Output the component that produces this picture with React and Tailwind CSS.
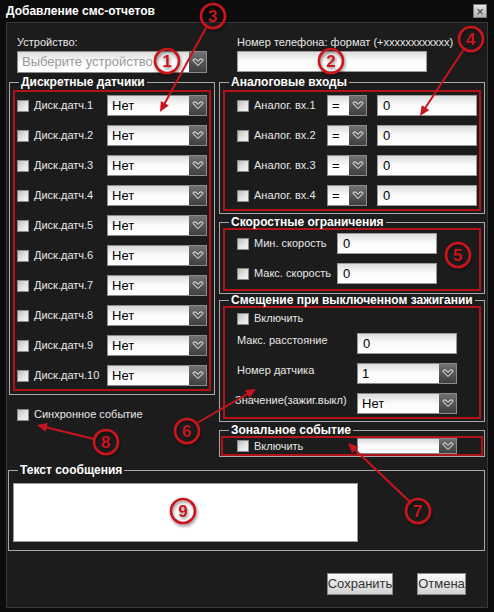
import React from "react";

const Chevron = () => (
  <svg width="12" height="9" viewBox="0 0 12 9">
    <path d="M1.2 1.8 Q1.4 1 2.2 1 L3.8 1 L6 3.4 L8.2 1 L9.8 1 Q10.6 1 10.8 1.8 L10.8 2.6 L6 7.6 L1.2 2.6 Z" fill="none" stroke="#ffffff" strokeWidth="1" strokeLinejoin="round" />
  </svg>
);

const Check = () => (
  <div className="w-[12px] h-[12px] shrink-0 border border-[#8a8a8a] bg-gradient-to-br from-[#bdbdbd] via-[#e2e2e2] to-[#f6f6f6]" />
);

function Select({ w, h = "h-[21px]", value, placeholder }) {
  return (
    <div className={`${w} ${h} shrink-0 flex border border-[#8c8c8c]`}>
      <div className="flex-1 min-w-0 flex items-center pl-[4px] bg-gradient-to-b from-[#dcdcdc] via-[#fbfbfb] to-white text-[13px] text-black whitespace-nowrap overflow-hidden">
        {placeholder ? <span className="text-[#9a9a9a]">{placeholder}</span> : value}
      </div>
      <div className="w-[17px] shrink-0 flex items-center justify-center bg-gradient-to-b from-[#707070] to-[#3f3f3f]">
        <Chevron />
      </div>
    </div>
  );
}

function Input({ w, value }) {
  return (
    <div className={`${w} h-[21px] shrink-0 flex items-center pl-[5px] border border-[#9a9a9a] bg-gradient-to-b from-[#dedede] via-[#fbfbfb] to-white text-[13px] text-black`}>
      {value}
    </div>
  );
}

function Legend({ children }) {
  return (
    <legend className="ml-[9px] px-[2px] text-[12px] leading-[12px] font-bold text-white">{children}</legend>
  );
}

function Arrow({ x1, y1, x2, y2 }) {
  const dx = x2 - x1;
  const dy = y2 - y1;
  const len = Math.hypot(dx, dy);
  const ux = dx / len;
  const uy = dy / len;
  const hl = 10;
  const hw = 4.5;
  const bx = x2 - ux * hl;
  const by = y2 - uy * hl;
  const pts = `${x2},${y2} ${bx - uy * hw},${by + ux * hw} ${bx + uy * hw},${by - ux * hw}`;
  return (
    <g>
      <line x1={x1} y1={y1} x2={bx + ux * 2} y2={by + uy * 2} stroke="#c8141c" strokeWidth="2" />
      <polygon points={pts} fill="#c8141c" />
    </g>
  );
}

function Badge({ cx, cy, n }) {
  return (
    <g filter="url(#sh)">
      <circle cx={cx} cy={cy} r="12" fill="none" stroke="#c8141c" strokeWidth="2.6" />
      <text x={cx} y={cy + 6} textAnchor="middle" fontSize="17" fontWeight="bold" fill="#c8141c" fontFamily="Liberation Sans, Arial, sans-serif">
        {n}
      </text>
    </g>
  );
}

const discrete = [1, 2, 3, 4, 5, 6, 7, 8, 9, 10];
const analog = [1, 2, 3, 4];

export default function App() {
  return (
    <div className="relative w-[494px] h-[612px] overflow-hidden bg-[#0c0c0c] font-['Liberation_Sans',Arial,sans-serif] text-[11px] text-[#e8e8e8] flex flex-col">
      {/* title bar */}
      <div className="h-[22px] shrink-0 flex items-center justify-between pl-[6px] pr-[7px]">
        <span className="text-[12px] font-bold text-white">Добавление смс-отчетов</span>
        <div className="w-[14px] h-[14px] flex items-center justify-center bg-gradient-to-b from-[#e2e2e2] to-[#b4b4b4] border border-[#777] text-[#333] text-[13px] leading-none">×</div>
      </div>

      {/* panel */}
      <div className="mx-[6px] h-[586px] bg-[#1c1c1c] border border-[#3a3a3a] flex flex-col">
        {/* top inputs */}
        <div className="flex pt-[11px] pl-[10px]">
          <div className="w-[220px]">
            <div className="h-[16px] leading-[16px]">Устройство:</div>
            <div className="mt-[1px]">
              <Select w="w-[190px]" h="h-[22px]" placeholder="Выберите устройство" />
            </div>
          </div>
          <div>
            <div className="h-[16px] leading-[16px]">Номер телефона: формат (+xxxxxxxxxxxx)</div>
            <div className="mt-[1px]">
              <Input w="w-[190px]" value="" />
            </div>
          </div>
        </div>

        {/* two columns */}
        <div className="flex items-start mt-[3px]">
          {/* left column */}
          <div className="ml-[2px] w-[206px] flex flex-col">
            <fieldset className="border border-[#a8a8a8] pb-[3px]">
              <Legend>Дискретные датчики</Legend>
              <div className="mt-[2px] mx-[3px] border-2 border-[#b3121a] pl-[2px] pr-[2px] py-[3px] flex flex-col gap-[9px]">
                {discrete.map((i) => (
                  <div key={i} className="h-[21px] flex items-center">
                    <Check />
                    <span className="ml-[5px] w-[73px] whitespace-nowrap">Диск.датч.{i}</span>
                    <Select w="w-[100px]" value="Нет" />
                  </div>
                ))}
              </div>
            </fieldset>
            <div className="mt-[13px] pl-[8px] flex items-center h-[13px]">
              <Check />
              <span className="ml-[5px]">Синхронное событие</span>
            </div>
          </div>

          {/* right column */}
          <div className="ml-[4px] w-[266px] flex flex-col">
            <fieldset className="border border-[#a8a8a8] pb-[2px]">
              <Legend>Аналоговые входы</Legend>
              <div className="mt-[2px] mx-[3px] border-2 border-[#b3121a] pl-[12px] py-[3px] flex flex-col gap-[9px]">
                {analog.map((i) => (
                  <div key={i} className="h-[21px] flex items-center">
                    <Check />
                    <span className="ml-[5px] w-[73px] whitespace-nowrap">Аналог. вх.{i}</span>
                    <Select w="w-[40px]" value="=" />
                    <div className="ml-[10px]">
                      <Input w="w-[100px]" value="0" />
                    </div>
                  </div>
                ))}
              </div>
            </fieldset>

            <fieldset className="mt-[2px] border border-[#a8a8a8] pb-[2px]">
              <Legend>Скоростные ограничения</Legend>
              <div className="mx-[3px] border-2 border-[#b3121a] pl-[12px] pt-[3px] pb-[5px] flex flex-col gap-[9px]">
                <div className="h-[21px] flex items-center">
                  <Check />
                  <span className="ml-[5px] w-[83px] whitespace-nowrap">Мин. скорость</span>
                  <Input w="w-[100px]" value="0" />
                </div>
                <div className="h-[21px] flex items-center">
                  <Check />
                  <span className="ml-[5px] w-[83px] whitespace-nowrap">Макс. скорость</span>
                  <Input w="w-[100px]" value="0" />
                </div>
              </div>
            </fieldset>

            <fieldset className="border border-[#a8a8a8] pb-[2px]">
              <Legend>Смещение при выключенном зажигании</Legend>
              <div className="mx-[3px] border-2 border-[#b3121a] pl-[12px] pt-[4px] pb-[3px] flex flex-col">
                <div className="h-[13px] flex items-center">
                  <Check />
                  <span className="ml-[5px]">Включить</span>
                </div>
                <div className="mt-[8px] flex items-start">
                  <span className="w-[120px] leading-[15px] whitespace-nowrap">Макс. расстояние</span>
                  <Input w="w-[100px]" value="0" />
                </div>
                <div className="mt-[9px] flex items-start">
                  <span className="w-[120px] leading-[15px] whitespace-nowrap">Номер датчика</span>
                  <Select w="w-[100px]" value="1" />
                </div>
                <div className="mt-[9px] flex items-start">
                  <span className="w-[120px] -ml-[2px] leading-[15px] whitespace-nowrap">Значение(зажиг.выкл)</span>
                  <div className="ml-[2px]">
                    <Select w="w-[100px]" value="Нет" />
                  </div>
                </div>
              </div>
            </fieldset>

            <fieldset className="mt-[2px] border border-[#a8a8a8]">
              <Legend>Зональное событие</Legend>
              <div className="mx-[1px] border-2 border-[#b3121a] pl-[14px] flex flex-col">
                <div className="h-[16px] flex items-center">
                  <Check />
                  <span className="ml-[5px] w-[103px]">Включить</span>
                  <Select w="w-[100px]" h="h-[16px]" value="" />
                </div>
              </div>
            </fieldset>
          </div>
        </div>

        {/* message text */}
        <fieldset className="mt-[7px] ml-[1px] w-[477px] border border-[#a8a8a8] pb-[8px]">
          <Legend>Текст сообщения</Legend>
          <div className="mt-[7px] ml-[4px] w-[345px] h-[59px] bg-white border border-[#9a9a9a]" />
        </fieldset>

        {/* buttons */}
        <div className="mt-[22px] flex justify-end pr-[21px] gap-[24px]">
          <div className="w-[66px] h-[22px] flex items-center justify-center border border-[#8a8a8a] bg-gradient-to-b from-[#fafafa] to-[#d2d2d2] text-[13px] text-[#333]">Сохранить</div>
          <div className="w-[49px] h-[22px] flex items-center justify-center border border-[#8a8a8a] bg-gradient-to-b from-[#fafafa] to-[#d2d2d2] text-[13px] text-[#333]">Отмена</div>
        </div>
      </div>

      {/* annotations overlay */}
      <svg className="absolute inset-0 pointer-events-none" width="494" height="612" viewBox="0 0 494 612">
        <defs>
          <filter id="sh" x="-50%" y="-50%" width="200%" height="200%">
            <feDropShadow dx="1" dy="2" stdDeviation="1.5" floodColor="#000" floodOpacity="0.45" />
          </filter>
        </defs>
        <Arrow x1={207} y1={26} x2={160} y2={112} />
        <Arrow x1={464} y1={49} x2={420} y2={116} />
        <Arrow x1={197} y1={423} x2={256} y2={389} />
        <Arrow x1={410} y1={502} x2={348} y2={443} />
        <Arrow x1={94} y1={439} x2={37} y2={425} />
        <Badge cx={213} cy={16} n="3" />
        <Badge cx={167} cy={61} n="1" />
        <Badge cx={331} cy={61} n="2" />
        <Badge cx={471} cy={39} n="4" />
        <Badge cx={458} cy={255} n="5" />
        <Badge cx={187} cy={431} n="6" />
        <Badge cx={418} cy={511} n="7" />
        <Badge cx={106} cy={442} n="8" />
        <Badge cx={183} cy={511} n="9" />
      </svg>
    </div>
  );
}
